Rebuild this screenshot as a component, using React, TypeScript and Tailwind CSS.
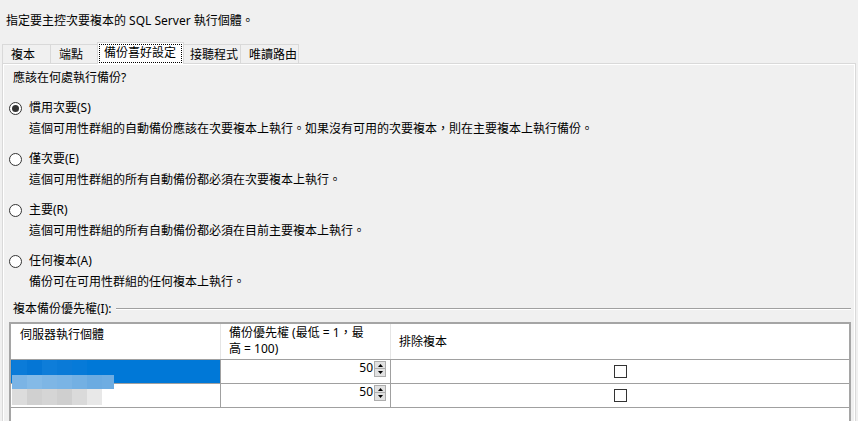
import React from "react";

const tabs = [
  { label: "複本", w: "w-[49px]", pl: "pl-[8px]" },
  { label: "端點", w: "w-[48px]", pl: "pl-[8px]" },
  { label: "備份喜好設定", active: true },
  { label: "接聽程式", w: "w-[58px]", pl: "pl-[6px]" },
  { label: "唯讀路由", w: "w-[59px]", pl: "pl-[8px]" },
];

const options = [
  {
    label: "慣用次要(S)",
    desc: "這個可用性群組的自動備份應該在次要複本上執行。如果沒有可用的次要複本，則在主要複本上執行備份。",
    checked: true,
  },
  { label: "僅次要(E)", desc: "這個可用性群組的所有自動備份都必須在次要複本上執行。" },
  { label: "主要(R)", desc: "這個可用性群組的所有自動備份都必須在目前主要複本上執行。" },
  { label: "任何複本(A)", desc: "備份可在可用性群組的任何複本上執行。" },
];

const blueRow = ["#0b7bd8", "#0576d5", "#0e7dd9", "#0a7ad7", "#067ad8", "#0078d7"];
const lightRow = ["#7bb4e5", "#84bae7", "#7eb6e5", "#7ab4e5", "#73b0e3", "#6babe1", "#6eade2"];
const greyRow = ["#dcdcdc", "#d0d0d0", "#d5d5d5", "#cfcfcf", "#dadada", "#e8e8e8"];

function Radio({ checked }: { checked?: boolean }) {
  return (
    <span className="w-[13px] h-[13px] rounded-full border border-[#333] bg-white flex items-center justify-center shrink-0">
      {checked && <span className="w-[7px] h-[7px] rounded-full bg-[#333]" />}
    </span>
  );
}

function Spinner() {
  return (
    <div className="flex flex-col w-[12px] mt-px">
      <div className="h-[8px] border border-[#adadad] bg-[#e1e1e1] flex items-center justify-center">
        <svg width="5" height="3" viewBox="0 0 5 3">
          <path d="M2.5 0 L5 3 L0 3 Z" fill="#000" />
        </svg>
      </div>
      <div className="h-[8px] border border-t-0 border-[#adadad] bg-[#e1e1e1] flex items-center justify-center">
        <svg width="5" height="3" viewBox="0 0 5 3">
          <path d="M0 0 L5 0 L2.5 3 Z" fill="#000" />
        </svg>
      </div>
    </div>
  );
}

function Row({ selected }: { selected?: boolean }) {
  return (
    <div className="h-[24px] flex border-b border-[#a0a0a0]">
      <div className={`w-[210px] border-r border-[#a0a0a0] ${selected ? "bg-[#0078d7]" : ""}`} />
      <div className="w-[170px] border-r border-[#a0a0a0] flex justify-end items-start pr-[4px]">
        <span className="mr-px">50</span>
        <Spinner />
      </div>
      <div className="flex-1 flex items-center justify-center">
        <span className="w-[13px] h-[13px] border border-[#333] bg-white" />
      </div>
    </div>
  );
}

export default function App() {
  return (
    <div className="w-[858px] h-[421px] overflow-hidden bg-[#f0f0f0] text-[12px] leading-[16px] text-black font-['Noto_Sans','Noto_Sans_CJK_TC',sans-serif] flex flex-col">
      <p className="pt-[13px] pl-[6px]">指定要主控次要複本的 SQL Server 執行個體。</p>

      {/* tab strip */}
      <div className="mt-[13px] ml-[2px] flex items-start h-[22px] relative z-10">
        {tabs.map((t, i) =>
          t.active ? (
            <div key={i} className="-ml-px h-[22px] w-[87px] border border-b-0 border-[#d9d9d9] bg-white p-px">
              <div className="h-full border border-dotted border-black pl-[4px]">{t.label}</div>
            </div>
          ) : (
            <div
              key={i}
              className={`${i === 0 ? "" : "-ml-px"} mt-[2px] h-[19px] ${t.w} ${t.pl} pt-[2px] border border-b-0 border-[#d9d9d9] bg-[#f0f0f0]`}
            >
              {t.label}
            </div>
          )
        )}
      </div>

      {/* tab page */}
      <div className="-mt-px ml-[2px] mr-[2px] flex-1 border border-[#d9d9d9] shadow-[inset_0_0_0_1px_#fff] bg-[#f0f0f0] pl-[6px] pr-[4px] pt-[6px] flex flex-col">
        <p className="ml-[4px]">應該在何處執行備份?</p>

        {options.map((o) => (
          <div key={o.label} className="mt-[14px]">
            <label className="flex items-center gap-[7px]">
              <Radio checked={o.checked} />
              <span>{o.label}</span>
            </label>
            <p className="mt-[5px] pl-[20px]">{o.desc}</p>
          </div>
        ))}

        <div className="mt-[11px] flex items-center">
          <span className="ml-[4px]">複本備份優先權(I):</span>
          <div className="flex-1 ml-[4px] border-t border-[#a0a0a0] border-b border-b-white" />
        </div>

        {/* grid */}
        <div className="mt-[5px] h-[130px] shrink-0 border-2 border-[#a5a5a5] bg-white relative">
          <div className="h-[36px] flex border-b border-[#a0a0a0]">
            <div className="w-[210px] border-r border-[#e5e5e5] pl-[9px] pt-[3px]">伺服器執行個體</div>
            <div className="w-[170px] border-r border-[#e5e5e5] pl-[8px] pt-px">
              備份優先權 (最低 = 1，最
              <br />
              高 = 100)
            </div>
            <div className="flex-1 pl-[8px] pt-[10px]">排除複本</div>
          </div>
          <Row selected />
          <Row />

          {/* blurred server names */}
          <div className="absolute left-px top-[36px] flex flex-col">
            <div className="flex">
              {blueRow.map((c, i) => (
                <span key={i} className="w-[15px] h-[15px]" style={{ backgroundColor: c }} />
              ))}
            </div>
            <div className="flex">
              {lightRow.map((c, i) => (
                <span key={i} className={`${i === 6 ? "w-[12px]" : "w-[15px]"} h-[14px]`} style={{ backgroundColor: c }} />
              ))}
            </div>
            <div className="flex">
              {greyRow.map((c, i) => (
                <span key={i} className="w-[15px] h-[16px]" style={{ backgroundColor: c }} />
              ))}
            </div>
          </div>
        </div>
      </div>
    </div>
  );
}
